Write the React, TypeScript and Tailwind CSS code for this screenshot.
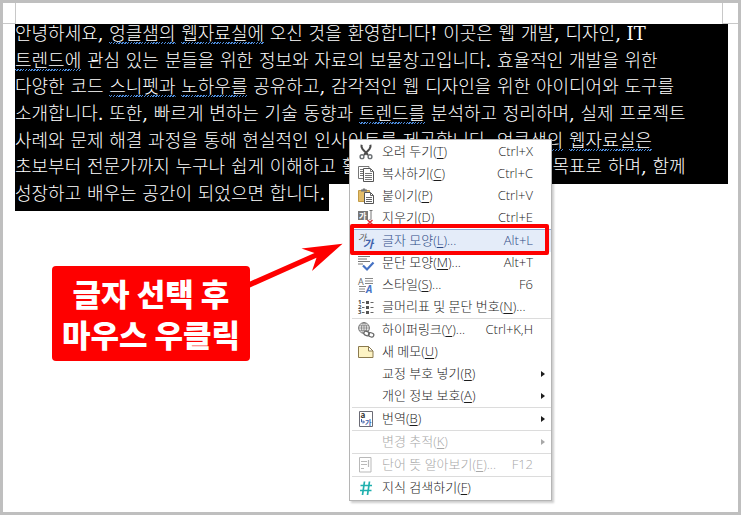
import React from 'react';

type MenuEntry = {
  label: string;
  accessKey: string;
  more?: boolean;
  shortcut?: string;
  icon?: React.ReactNode;
  submenu?: boolean;
  disabled?: boolean;
  active?: boolean;
};

const Icon = ({ children }: { children: React.ReactNode }) => (
  <svg viewBox="0 0 16 16" className="w-4 h-4 overflow-visible" fill="none" aria-hidden="true">
    {children}
  </svg>
);

const CutIcon = () => (
  <Icon>
    <path d="M3.6 .8c-.5 1.800 0 3 1 4.400L10 11M12.400 .8c.5 1.800 0 3-1 4.400L6 11" stroke="#4a4a4a" strokeWidth="2.100" />
    <circle cx="4" cy="12.700" r="1.900" stroke="#6b7074" strokeWidth="1.400" />
    <circle cx="12" cy="12.700" r="1.900" stroke="#6b7074" strokeWidth="1.400" />
  </Icon>
);

const CopyIcon = () => (
  <Icon>
    <path d="M.5 .5h10.500v12H.5z" fill="#fff" stroke="#777" />
    <path d="M2 3.500h3M2 5.500h3M2 7.500h3M2 9.500h3" stroke="#777" />
    <path d="M5.500 2.500h7l3 3v10h-10z" fill="#fff" stroke="#555" />
    <path d="M12.500 2.500v3h3M7 7.500h7M7 9.500h7M7 11.500h7M7 13.500h7" stroke="#777" />
  </Icon>
);

const PasteIcon = () => (
  <Icon>
    <path d="M.5 2.500h11v11H.5z" fill="#e3bd68" stroke="#c29a45" />
    <path d="M3 3.500V1.500h1.500L5 .5h2l.5 1H9v2z" fill="#777" />
    <path d="M6.500 4.500h6l3 3v8h-9z" fill="#fff" stroke="#555" />
    <path d="M12.500 4.500v3h3M8 9.500h6M8 11.500h6M8 13.500h6" stroke="#666" />
  </Icon>
);

const EraseIcon = () => (
  <Icon>
    <path d="M0 1h10v9H0z" fill="#777" />
    <text x="1" y="8.500" fontSize="8" fontWeight="700" fill="#fff">가</text>
    <path d="M11.500 .5h3M13 .5v9M11.500 9.500h1" stroke="#777" />
    <path d="M9.500 10l5 4.500M14.500 10l-5 4.500" stroke="#d9363e" strokeWidth="1.500" />
  </Icon>
);

const CharShapeIcon = () => (
  <Icon>
    <text x="0" y="8" fontSize="9" fontWeight="400" fontStyle="italic" fill="#555">가</text>
    <text x="5" y="15" fontSize="11" fontStyle="italic" fontWeight="700" fill="#3f62ab">가</text>
  </Icon>
);

const ParagraphIcon = () => (
  <Icon>
    <path d="M0 1.500h12M0 4h9M0 6.500h12M0 9h5" stroke="#777" />
    <path d="M5 10.500l4 4 6.500-7" stroke="#4672c4" strokeWidth="2.200" />
  </Icon>
);

const StyleIcon = () => (
  <Icon>
    <text x="0" y="7.500" fontSize="9" fontWeight="400" fill="#666">A</text>
    <path d="M7 1.500h8M7 4h8M7 6.500h8" stroke="#888" />
    <path d="M1 9.500h7M1 12h6M1 14.500h6" stroke="#888" />
    <text x="8" y="15.500" fontSize="10" fontWeight="700" fontStyle="italic" fill="#4672c4">A</text>
  </Icon>
);

const BulletIcon = () => (
  <Icon>
    {['1', '2', '3'].map((n, i) => (
      <g key={n}>
        <text x="0" y={5 + i * 5} fontSize="6" fontWeight="700" fill="#444">{n}</text>
        <path d={`M4 ${3.5 + i * 5}h2.500M12.500 ${3.5 + i * 5}h3`} stroke="#666" />
        <path d={`M8 ${2 + i * 5}h3v3H8z`} fill="#555" />
      </g>
    ))}
  </Icon>
);

const LinkIcon = () => (
  <Icon>
    <circle cx="6" cy="6" r="5.400" stroke="#777" />
    <ellipse cx="6" cy="6" rx="2.500" ry="5.400" stroke="#777" strokeWidth=".8" />
    <path d="M1 3.800h10M.5 6h11M1 8.300h10M6 .5v11" stroke="#777" strokeWidth=".8" />
    <rect x="6" y="9.300" width="5.500" height="4" rx="2" fill="#fff" stroke="#666" strokeWidth="1.200" transform="rotate(20 8 11)" />
    <rect x="10.300" y="10.800" width="5.500" height="4" rx="2" stroke="#666" strokeWidth="1.200" transform="rotate(20 13 13)" />
  </Icon>
);

const MemoIcon = () => (
  <Icon>
    <path d="M.5 2.500h10l4.500 4.500v6.500H.5z" fill="#fdf3c4" stroke="#8b7a4e" />
    <path d="M10.500 2.500v4.500H15z" fill="#fff" stroke="#8b7a4e" />
  </Icon>
);

const TranslateIcon = () => (
  <Icon>
    <path d="M1.500 .5h13v15h-13z" fill="#fff" stroke="#6b6b75" />
    <text x="2.500" y="6.500" fontSize="8" fontWeight="700" fill="#333">a</text>
    <path d="M3.500 8v3h2.500M5 9.500l1.500 1.500L5 12.500" stroke="#3f62ab" />
    <text x="7" y="14" fontSize="7" fontWeight="700" fill="#3f62ab">가</text>
  </Icon>
);

const DictionaryIcon = () => (
  <Icon>
    <path d="M1.500 .5h11.500v14.500h-11.500z" stroke="#b9b9b9" />
    <path d="M3 4.500h6M3 7.500h6M10.500 3v7M3 11.500h3" stroke="#b9b9b9" strokeWidth="1.200" />
  </Icon>
);

const HashIcon = () => (
  <Icon>
    <path d="M6.500 1.500l-2 13.500M11.500 1.500l-2 13.500M2.500 5.500h11.500M2 10.500h11.500" stroke="#1fb0ae" strokeWidth="1.700" />
  </Icon>
);

// Each group is divided from the next by a thin rule
const menuGroups: MenuEntry[][] = [
  [
    { label: '오려 두기', accessKey: 'T', shortcut: 'Ctrl+X', icon: <CutIcon /> },
    { label: '복사하기', accessKey: 'C', shortcut: 'Ctrl+C', icon: <CopyIcon /> },
    { label: '붙이기', accessKey: 'P', shortcut: 'Ctrl+V', icon: <PasteIcon /> },
    { label: '지우기', accessKey: 'D', shortcut: 'Ctrl+E', icon: <EraseIcon /> },
  ],
  [
    { label: '글자 모양', accessKey: 'L', more: true, shortcut: 'Alt+L', icon: <CharShapeIcon />, active: true },
    { label: '문단 모양', accessKey: 'M', more: true, shortcut: 'Alt+T', icon: <ParagraphIcon /> },
    { label: '스타일', accessKey: 'S', more: true, shortcut: 'F6', icon: <StyleIcon /> },
    { label: '글머리표 및 문단 번호', accessKey: 'N', more: true, icon: <BulletIcon /> },
  ],
  [
    { label: '하이퍼링크', accessKey: 'Y', more: true, shortcut: 'Ctrl+K,H', icon: <LinkIcon /> },
    { label: '새 메모', accessKey: 'U', icon: <MemoIcon /> },
    { label: '교정 부호 넣기', accessKey: 'R', submenu: true },
    { label: '개인 정보 보호', accessKey: 'A', submenu: true },
  ],
  [{ label: '번역', accessKey: 'B', icon: <TranslateIcon />, submenu: true }],
  [{ label: '변경 추적', accessKey: 'K', submenu: true, disabled: true }],
  [{ label: '단어 뜻 알아보기', accessKey: 'E', more: true, shortcut: 'F12', icon: <DictionaryIcon />, disabled: true }],
  [{ label: '지식 검색하기', accessKey: 'F', icon: <HashIcon /> }],
];

const MenuItem = ({ item }: { item: MenuEntry }) => (
  <button
    type="button"
    role="menuitem"
    disabled={item.disabled}
    className={`relative flex items-center w-full h-[22px] pl-2 text-[13px] text-left whitespace-nowrap ${
      item.active ? 'bg-[#e4ecf9] text-[#2f4b86]' : 'text-[#1c1c1c] disabled:text-[#a8a8a8]'
    }`}
  >
    <span className="w-4 h-4 mr-2 shrink-0">{item.icon}</span>
    <span className="flex-1">
      {item.label}(<u className="underline-offset-2">{item.accessKey}</u>){item.more && '...'}
    </span>
    <span>{item.shortcut}</span>
    <span className="w-[18px] pl-2 shrink-0">
      {item.submenu && (
        <svg viewBox="0 0 4 6" className="w-1 h-1.5" fill="currentColor" aria-hidden="true">
          <path d="M0 0l4 3-4 3z" />
        </svg>
      )}
    </span>
    {/* Red frame round the item to click */}
    {item.active && <span className="absolute -top-1.5 left-0 right-0.5 h-[31px] border-4 border-[#fe0000] rounded-xs" />}
  </button>
);

const ContextMenu = () => (
  <div
    role="menu"
    className="absolute top-[139px] left-[349px] w-[203px] py-px bg-white border border-[#b5b5b5] shadow-[2px_2px_2px_rgba(0,0,0,0.2)] font-light font-['Open_Sans','Noto_Sans_CJK_KR',sans-serif]"
  >
    {menuGroups.map((group, i) => (
      <React.Fragment key={i}>
        {i > 0 && <div className={`h-px ml-0.5 ${i === 1 ? 'bg-[#8fa9d6]' : 'bg-[#dcdcdc]'}`} />}
        {group.map((item) => (
          <MenuItem key={item.label} item={item} />
        ))}
      </React.Fragment>
    ))}
  </div>
);

// Spell-check squiggle
const Misspelt = ({ children }: { children: React.ReactNode }) => (
  <span className="bg-[repeating-linear-gradient(135deg,#4f8fe0_0_1px,#000_1px_2px)] bg-[length:100%_2px] bg-bottom bg-no-repeat">
    {children}
  </span>
);

const SelectedText = () => (
  <div className="text-lg text-white whitespace-nowrap font-light font-['DejaVu_Serif','Noto_Sans_CJK_KR',serif]">
    <div className="grid auto-rows-fr h-40 bg-black leading-5 overflow-hidden">
      <p>안녕하세요, <Misspelt>엉클샘의</Misspelt> <Misspelt>웹자료실에</Misspelt> 오신 것을 환영합니다! 이곳은 웹 개발, 디자인, IT</p>
      <p><Misspelt>트렌드에</Misspelt> 관심 있는 분들을 위한 정보와 자료의 보물창고입니다. 효율적인 개발을 위한</p>
      <p>다양한 코드 <Misspelt>스니펫과</Misspelt> <Misspelt>노하우를</Misspelt> 공유하고, 감각적인 웹 디자인을 위한 아이디어와 도구를</p>
      <p>소개합니다. 또한, 빠르게 변하는 기술 동향과 <Misspelt>트렌드를</Misspelt> 분석하고 정리하며, 실제 프로젝트</p>
      <p>사례와 문제 해결 과정을 통해 현실적인 인사이트를 제공합니다. <Misspelt>엉클샘의</Misspelt> <Misspelt>웹자료실은</Misspelt></p>
      <p>초보부터 전문가까지 누구나 쉽게 이해하고 활용할 수 있도록 돕는 것을 목표로 하며, 함께</p>
    </div>
    <p className="w-fit h-[27px] pr-1 bg-black leading-5">성장하고 배우는 공간이 되었으면 합니다.</p>
  </div>
);

export default function App() {
  return (
    <main className="relative min-h-screen bg-white border-[3px] border-[#bfbfbf] overflow-hidden">
      {/* Margin corner marks */}
      <div className="flex justify-between h-[21px]">
        <span className="w-[13px] border-r border-b border-[#c8c8c8]" />
        <span className="w-4 border-l border-b border-[#c8c8c8]" />
      </div>

      <div className="ml-3 mr-2.5">
        <SelectedText />
      </div>

      <div className="w-[198px] mt-[55px] ml-[49px] pt-1.5 pb-[7px] rounded bg-[#fe0000] text-white text-center text-[31px]/[41px] font-black font-['Noto_Sans_CJK_KR',sans-serif]">
        <p>글자 선택 후</p>
        <p>마우스 우클릭</p>
      </div>

      {/* Arrow from the callout to the menu item */}
      <svg viewBox="0 0 98 52" className="absolute top-[235px] left-[243px] w-[98px] h-[52px]" fill="#fe0000" aria-hidden="true">
        <path d="M4 43.500L68.500 15 55.500 10.500 96.500 5.700 66 33 70.500 19.800 4 49.500z" />
      </svg>

      <div className="absolute -top-[3px] -left-[3px]">
        <ContextMenu />
      </div>
    </main>
  );
}
